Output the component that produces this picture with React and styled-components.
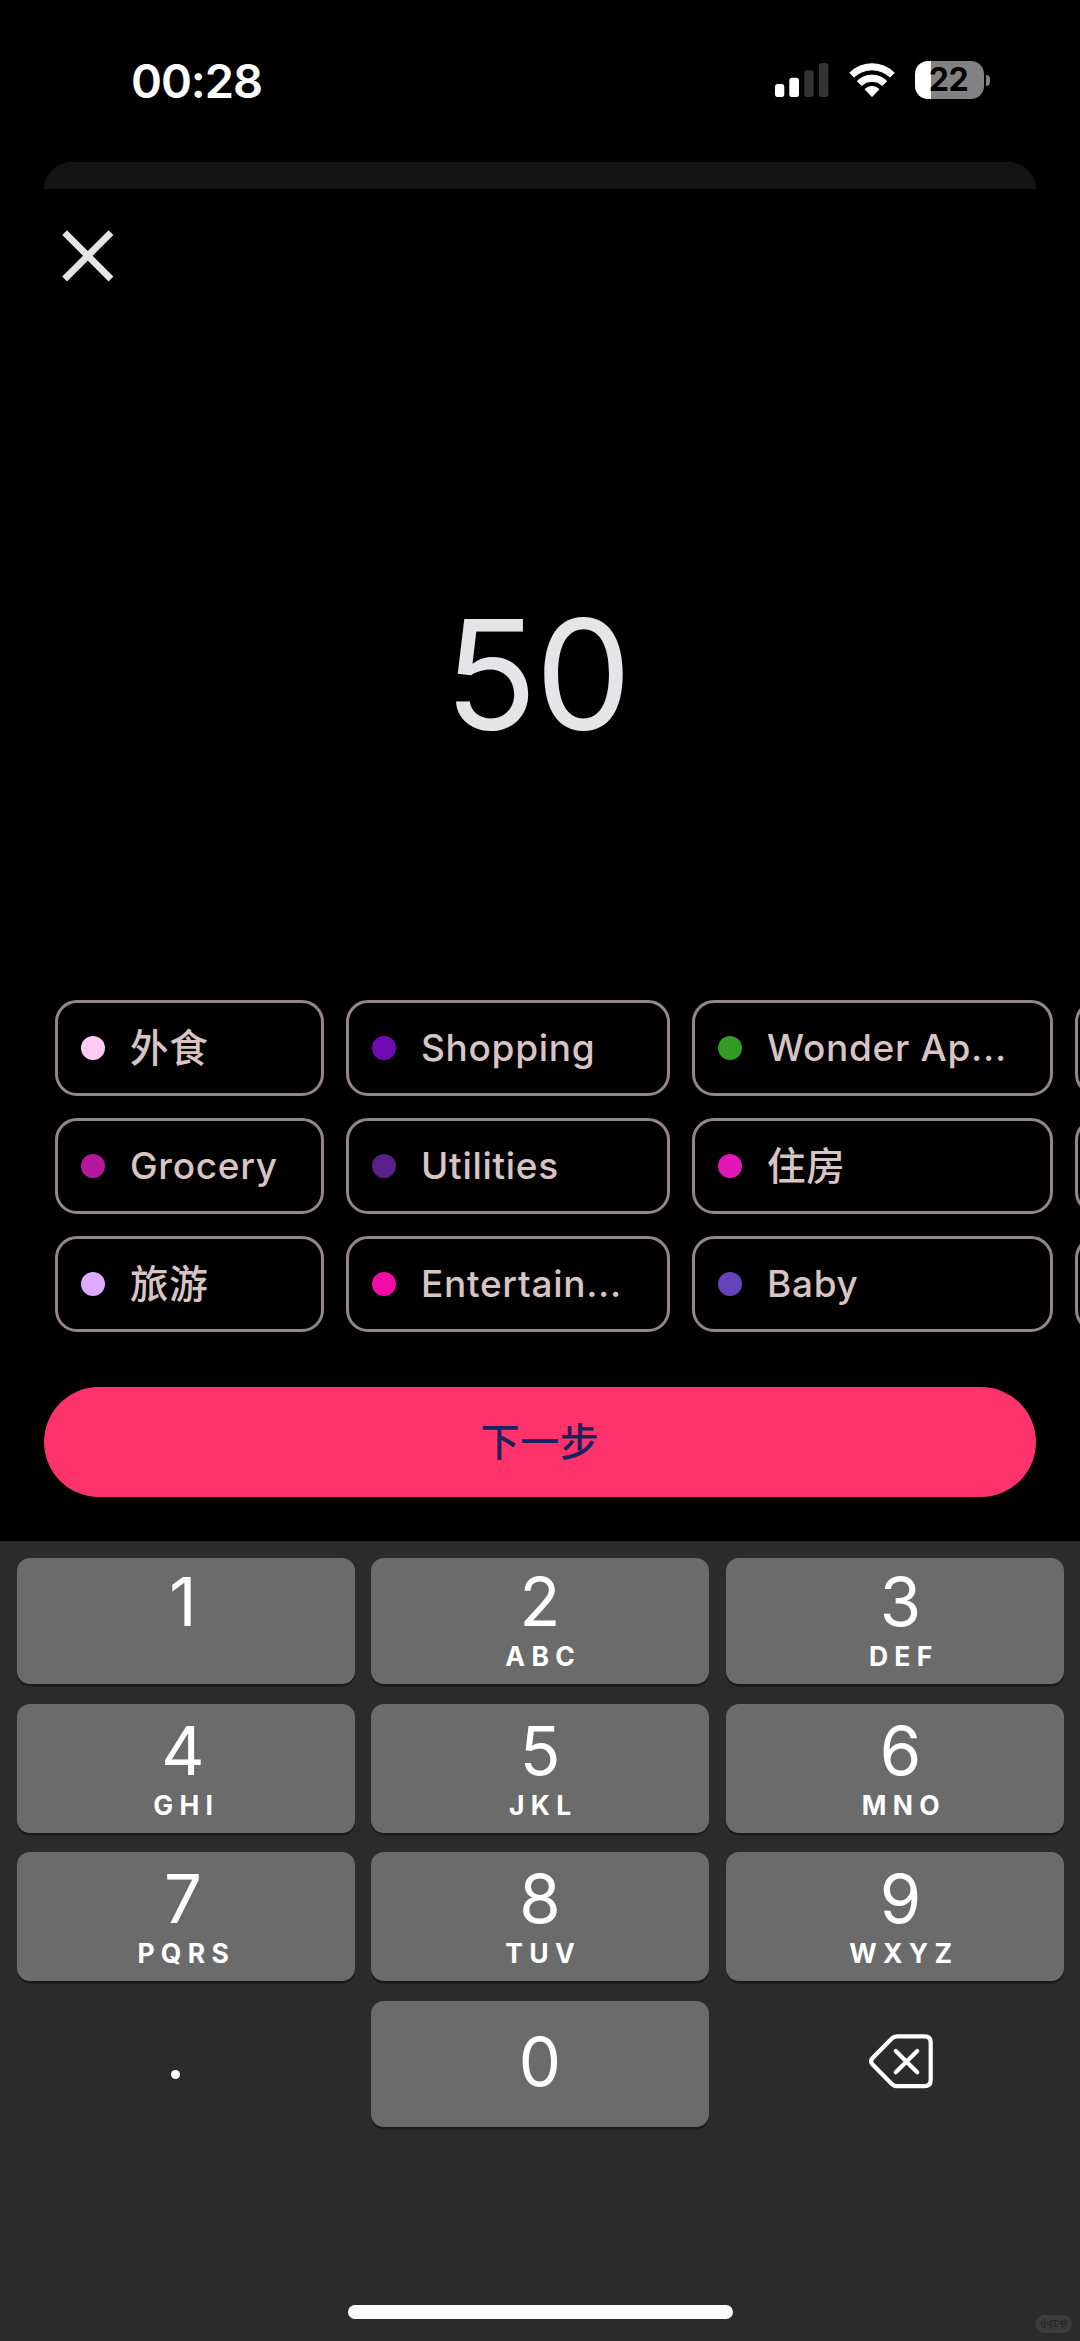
import React, { useState } from "react";
import styled, { createGlobalStyle } from "styled-components";

const GlobalStyle = createGlobalStyle`
    * {
        box-sizing: border-box;
        margin: 0;
        padding: 0;
    }

    body {
        background-color: #000;
        font-family: Inter, "Noto Sans CJK SC", sans-serif;
    }

    button {
        font-family: inherit;
        border: none;
        background: none;
        cursor: pointer;
    }
`;

const Screen = styled.div`
    position: relative;
    display: flex;
    flex-direction: column;
    width: 1080px;
    height: 2341px;
    overflow: hidden;
    background-color: #000;
`;

const StatusBar = styled.div`
    display: flex;
    justify-content: space-between;
    height: 162px;
    padding: 61px 90px 0 131px;
`;

const Time = styled.span`
    height: 38px;
    line-height: 39px;
    font-size: 47px;
    font-weight: 600;
    letter-spacing: -1.1px;
    color: #fff;
`;

const StatusIcons = styled.div`
    display: flex;
    align-items: flex-start;
    height: 38px;
`;

const Signal = styled.svg`
    margin: 2px 20px 0 0;
`;

const Wifi = styled.svg`
    margin: 2px 20px 0 0;
`;

const Battery = styled.div`
    display: flex;
    align-items: center;
    justify-content: center;
    width: 69px;
    height: 38px;
    padding-right: 2px;
    border-radius: 13px;
    background: linear-gradient(90deg, #fff 16px, #828282 16px);
    font-size: 32px;
    font-weight: 700;
    line-height: 38px;
    letter-spacing: -0.4px;
    color: #000;
`;

const BatteryTip = styled.div`
    width: 4px;
    height: 11px;
    margin: 14px 0 0 2px;
    border-radius: 0 5px 5px 0;
    background-color: #828282;
`;

const SheetEdge = styled.div`
    height: 27px;
    margin: 0 44px;
    border-radius: 27px 27px 0 0;
    background-color: #141414;
`;

const Header = styled.header`
    height: 130px;
    padding: 41px 0 0 62px;
`;

const CloseButton = styled.button`
    display: block;
    width: 52px;
    height: 52px;
`;

const Amount = styled.div`
    height: 681px;
    padding: 281px 6px 0 0;
    font-size: 153px;
    line-height: 150px;
    text-align: center;
    letter-spacing: -2px;
    color: #e5e4e7;
`;

const Categories = styled.div`
    display: grid;
    grid-template-columns: 269px 324px 361px 269px;
    grid-auto-rows: 96px;
    gap: 22px;
    height: 387px;
    padding-left: 55px;
`;

const Chip = styled.button`
    display: flex;
    align-items: center;
    gap: 25px;
    padding: 0 23px;
    border: 3px solid #938686;
    border-radius: 22px;
    font-size: ${({ $han }) => ($han ? 38.5 : 37)}px;
    font-weight: 500;
    line-height: 50px;
    letter-spacing: 0.7px;
    white-space: nowrap;
    color: #d7c4c3;
`;

const Dot = styled.span`
    flex: none;
    width: 24px;
    height: 24px;
    border-radius: 50%;
    background-color: ${({ color }) => color};
`;

const NextButton = styled.button`
    height: 110px;
    margin: 0 44px 44px;
    border-radius: 55px;
    background-color: #ff336b;
    font-size: 39px;
    font-weight: 500;
    line-height: 110px;
    letter-spacing: 0.6px;
    color: #1c2260;
`;

const Keyboard = styled.div`
    display: flex;
    flex: 1;
    flex-direction: column;
    align-items: center;
    padding-top: 17px;
    background-color: #2b2b2b;
`;

const Keys = styled.div`
    display: grid;
    grid-template-columns: repeat(3, 338px);
    grid-template-rows: 126px 129px 129px 126px;
    column-gap: 16.5px;
    row-gap: 19.5px;
`;

const Key = styled.button`
    display: flex;
    flex-direction: column;
    align-items: center;
    padding-top: ${({ $top }) => $top}px;
    padding-left: ${({ $shift }) => ($shift > 0 ? $shift * 2 : 0)}px;
    padding-right: ${({ $shift }) => ($shift < 0 ? $shift * -2 : 0)}px;
    border-radius: 13px;
    background-color: ${({ $plain }) => ($plain ? "transparent" : "#6b6b6b")};
    box-shadow: ${({ $plain }) => ($plain ? "none" : "0 2.5px 0 #1b1b1b")};
    color: #fff;
`;

const Digit = styled.span`
    height: 50px;
    font-size: 67px;
    font-weight: 400;
    line-height: 50px;
`;

const Letters = styled.span`
    height: 20px;
    margin-top: 19px;
    padding-left: 6.5px;
    font-size: 26.5px;
    font-weight: 700;
    line-height: 20px;
    letter-spacing: 6.3px;
`;

const Point = styled.span`
    width: 9px;
    height: 9px;
    background-color: #fff;
    border-radius: 50%;
`;

const HomeIndicator = styled.div`
    width: 385px;
    height: 14px;
    margin: auto 0 22px;
    border-radius: 7px;
    background-color: #fff;
`;

const Watermark = styled.div`
    position: absolute;
    right: 8px;
    bottom: 8px;
    width: 37px;
    height: 18px;
    border-radius: 9px;
    background-color: #3c3c3c;
    font-size: 9px;
    font-weight: 700;
    line-height: 18px;
    text-align: center;
    color: #262626;
`;

const categories = [
    { name: "外食", color: "#ffcbf2", han: true },
    { name: "Shopping", color: "#7209b7" },
    { name: "Wonder Ap...", color: "#339c27" },
    { name: "", color: "#000" },
    { name: "Grocery", color: "#b5179e" },
    { name: "Utilities", color: "#582088" },
    { name: "住房", color: "#e217ba", han: true },
    { name: "", color: "#000" },
    { name: "旅游", color: "#deaaff", han: true },
    { name: "Entertain...", color: "#f20ba6" },
    { name: "Baby", color: "#6643bd" },
    { name: "", color: "#000" },
];

const keys = [
    { digit: "1", letters: "" },
    { digit: "2", letters: "ABC" },
    { digit: "3", letters: "DEF" },
    { digit: "4", letters: "GHI" },
    { digit: "5", letters: "JKL" },
    { digit: "6", letters: "MNO" },
    { digit: "7", letters: "PQRS" },
    { digit: "8", letters: "TUV" },
    { digit: "9", letters: "WXYZ" },
];

// the side columns are not centred on their keys
const shifts = [-2.5, 0, 6];

const App = () => {
    const [amount, setAmount] = useState("50");

    const handleKey = (value) => {
        setAmount(amount + value);
    }

    const handleDelete = () => {
        setAmount(amount.slice(0, -1));
    }

    return (
        <>
            <GlobalStyle />
            <Screen>
                <StatusBar>
                    <Time>00:28</Time>
                    <StatusIcons>
                        <Signal width="54" height="35" viewBox="0 0 54 35">
                            <rect x="0" y="21" width="9.3" height="13" rx="2.8" fill="#fff" />
                            <rect x="14.3" y="14.7" width="9.7" height="19.3" rx="2.8" fill="#fff" />
                            <rect x="29.3" y="7.3" width="9.3" height="26.7" rx="2.8" fill="#333" />
                            <rect x="44" y="0" width="9.3" height="34" rx="2.8" fill="#333" />
                        </Signal>
                        <Wifi width="46" height="35" viewBox="0 0 46 35">
                            <g fill="#fff" stroke="#fff" strokeWidth="1" strokeLinejoin="round">
                                <path d="M.7 9.8A32 32 0 0 1 45.3 9.8L41 14.1A26 26 0 0 0 5 14.1Z" />
                                <path d="M8.3 18A21.3 21.3 0 0 1 37.7 18L33.3 22.4A15 15 0 0 0 12.7 22.4Z" />
                                <path d="M16 26.2A10.3 10.3 0 0 1 30 26.2L23 33.6Z" />
                            </g>
                        </Wifi>
                        <Battery>22</Battery>
                        <BatteryTip />
                    </StatusIcons>
                </StatusBar>
                <SheetEdge />
                <Header>
                    <CloseButton>
                        <svg width="52" height="52" viewBox="0 0 52 52">
                            <path d="M2.6 2.6 49 49M49 2.6 2.6 49" stroke="#e5e4e7" strokeWidth="6.8" />
                        </svg>
                    </CloseButton>
                </Header>
                <Amount>{amount}</Amount>
                <Categories>
                    {categories.map((item, i) => (
                        <Chip key={i} $han={item.han}>
                            <Dot color={item.color} />
                            {item.name}
                        </Chip>
                    ))}
                </Categories>
                <NextButton>下一步</NextButton>
                <Keyboard>
                    <Keys>
                        {keys.map((item, i) => (
                            <Key
                                key={item.digit}
                                $top={i < 3 ? 19 : 22}
                                $shift={shifts[i % 3]}
                                onClick={() => handleKey(item.digit)}
                            >
                                <Digit>{item.digit}</Digit>
                                {item.letters && <Letters>{item.letters}</Letters>}
                            </Key>
                        ))}
                        <Key $plain $top={69} $shift={-10} onClick={() => handleKey(".")}>
                            <Point />
                        </Key>
                        <Key $top={36} onClick={() => handleKey("0")}>
                            <Digit>0</Digit>
                        </Key>
                        <Key $plain $top={33} $shift={6} onClick={handleDelete}>
                            <svg width="64" height="55" viewBox="0 0 64 55" fill="none" stroke="#fff" strokeWidth="4.2" strokeLinecap="round" strokeLinejoin="round">
                                <path d="M28 2.4H55.5Q61.7 2.4 61.7 8.6V46Q61.7 52.2 55.5 52.2H28Q25 52.2 22.8 50L3.6 30.6Q0.6 27.3 3.6 24L22.8 4.6Q25 2.4 28 2.4Z" />
                                <path d="M26.8 17 48.2 38.2M48.2 17 26.8 38.2" />
                            </svg>
                        </Key>
                    </Keys>
                    <HomeIndicator />
                </Keyboard>
                <Watermark>小红书</Watermark>
            </Screen>
        </>
    );
};

export default App;
